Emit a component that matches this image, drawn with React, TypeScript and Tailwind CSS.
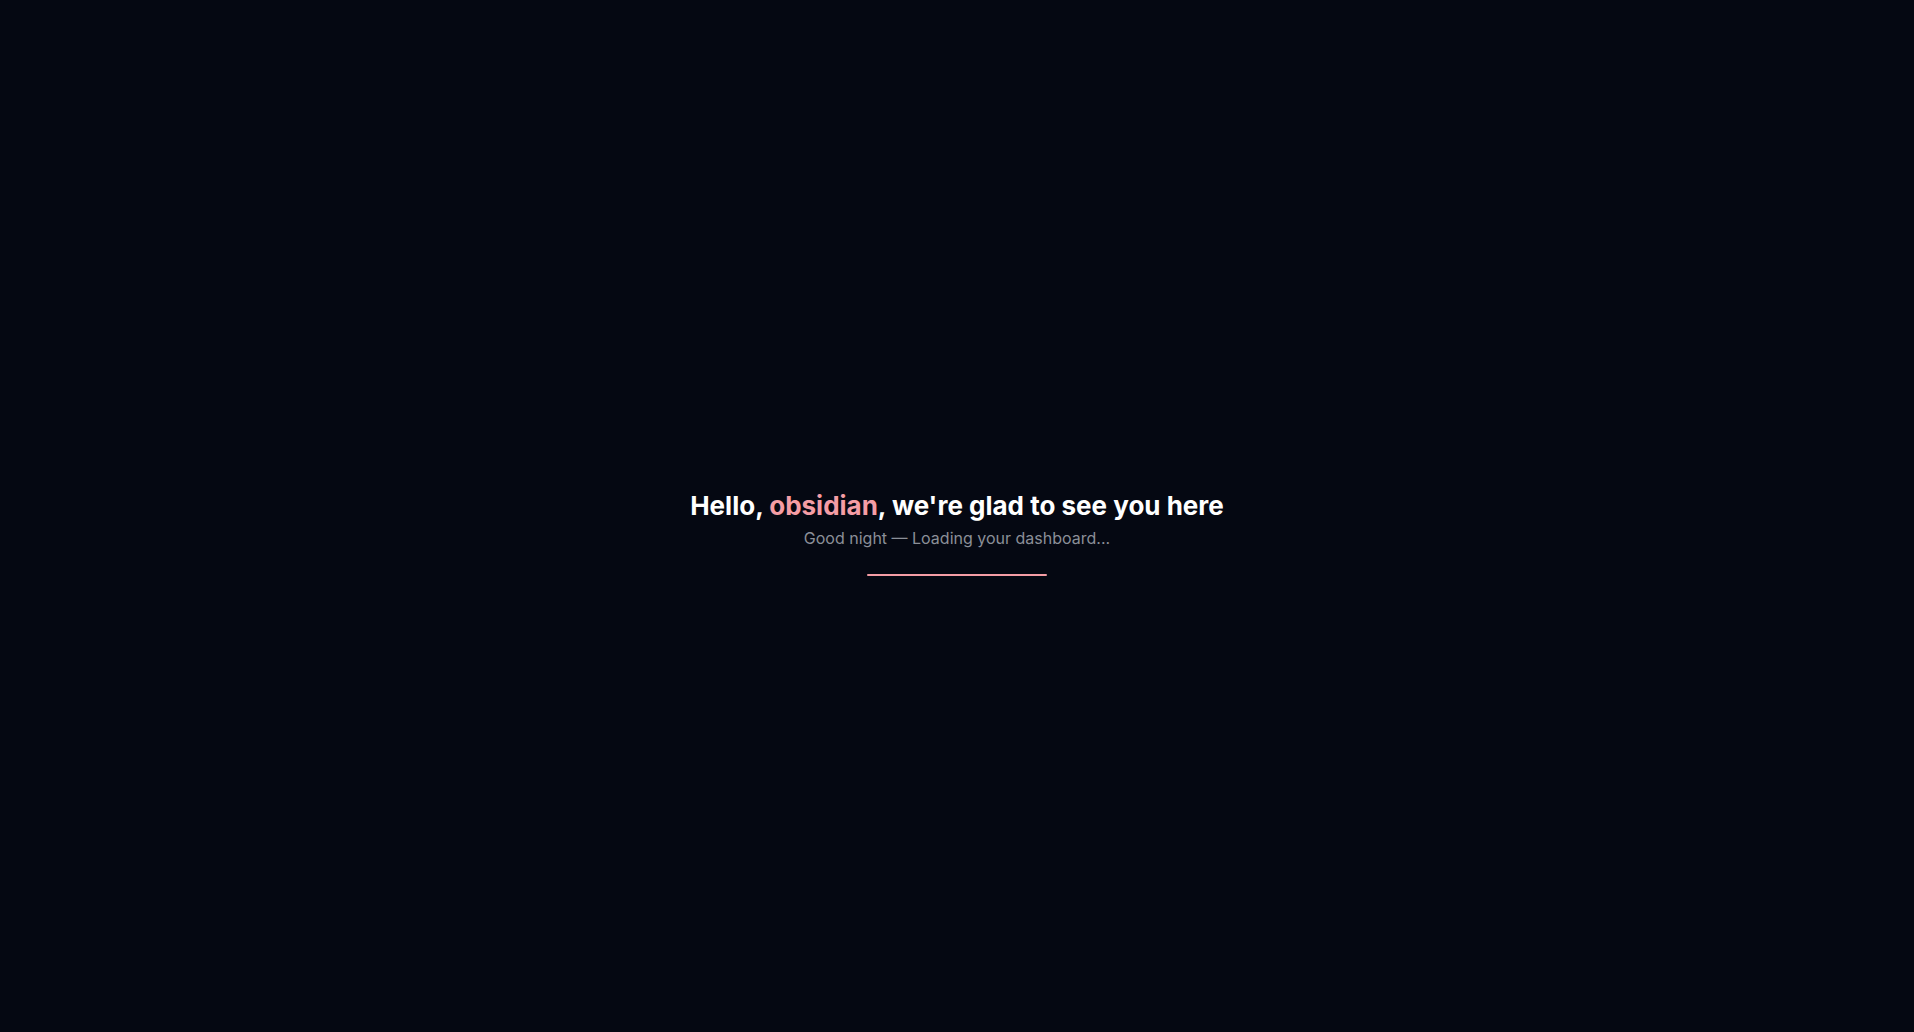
export default function App() {
  return (
    <div className="flex min-h-screen w-full items-center justify-center bg-[#050812] font-['Inter',sans-serif]">
      <div className="flex flex-col items-center pt-[34px]">
        <h1 className="text-[26px] font-bold leading-[32px] text-white">
          Hello, <span className="text-[#f59da5]">obsidian</span>, we're glad to see you here
        </h1>
        <p className="mt-[4px] text-base leading-6 text-[#8b8f98]">
          Good night — Loading your dashboard...
        </p>
        <div className="mt-[24px] h-[2px] w-[180px] rounded-full bg-[#f59da5]" />
      </div>
    </div>
  );
}
